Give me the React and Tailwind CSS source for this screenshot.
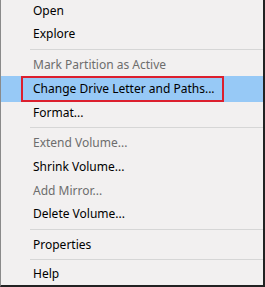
const Item = ({ label, disabled, h = "h-[23px]" }) => (
    <div className={`${h} flex items-center pl-[32px] ${disabled ? "text-[#6d6d6d]" : "text-[#000000]"}`}>
        {label}
    </div>
)

const Sep = ({ m }) => (
    <div className={m}>
        <div className="h-px ml-[29px] bg-[#d6d6d6]"></div>
    </div>
)

export default function App() {
    return (
        <div className="w-[265px] h-[287px] bg-[#f2f0f0] border-l border-l-[#8a8a8a] border-r-2 border-r-[#222] border-b-2 border-b-[#222] text-[12px] font-['Noto_Sans',sans-serif] leading-none overflow-hidden">
            <Item label="Open" h="h-[22px]" />
            <Item label="Explore" />
            <Sep m="pt-[4px] pb-[3px]" />
            <Item label="Mark Partition as Active" disabled />
            <div className="h-[26px] bg-[#97c9f6] flex items-center pl-[20px]">
                <div className="h-[26px] w-[203px] border-2 border-[#dc1f2e] flex items-center pl-[10px]">
                    Change Drive Letter and Paths...
                </div>
            </div>
            <Item label="Format..." h="h-[22px]" />
            <Sep m="pt-[3px] pb-[3px]" />
            <Item label="Extend Volume..." disabled h="h-[24px]" />
            <Item label="Shrink Volume..." h="h-[24px]" />
            <Item label="Add Mirror..." disabled />
            <Item label="Delete Volume..." />
            <Sep m="pt-[4px] pb-[3px]" />
            <Item label="Properties" />
            <Sep m="pt-[3px] pb-[2px]" />
            <Item label="Help" />
        </div>
    )
}
